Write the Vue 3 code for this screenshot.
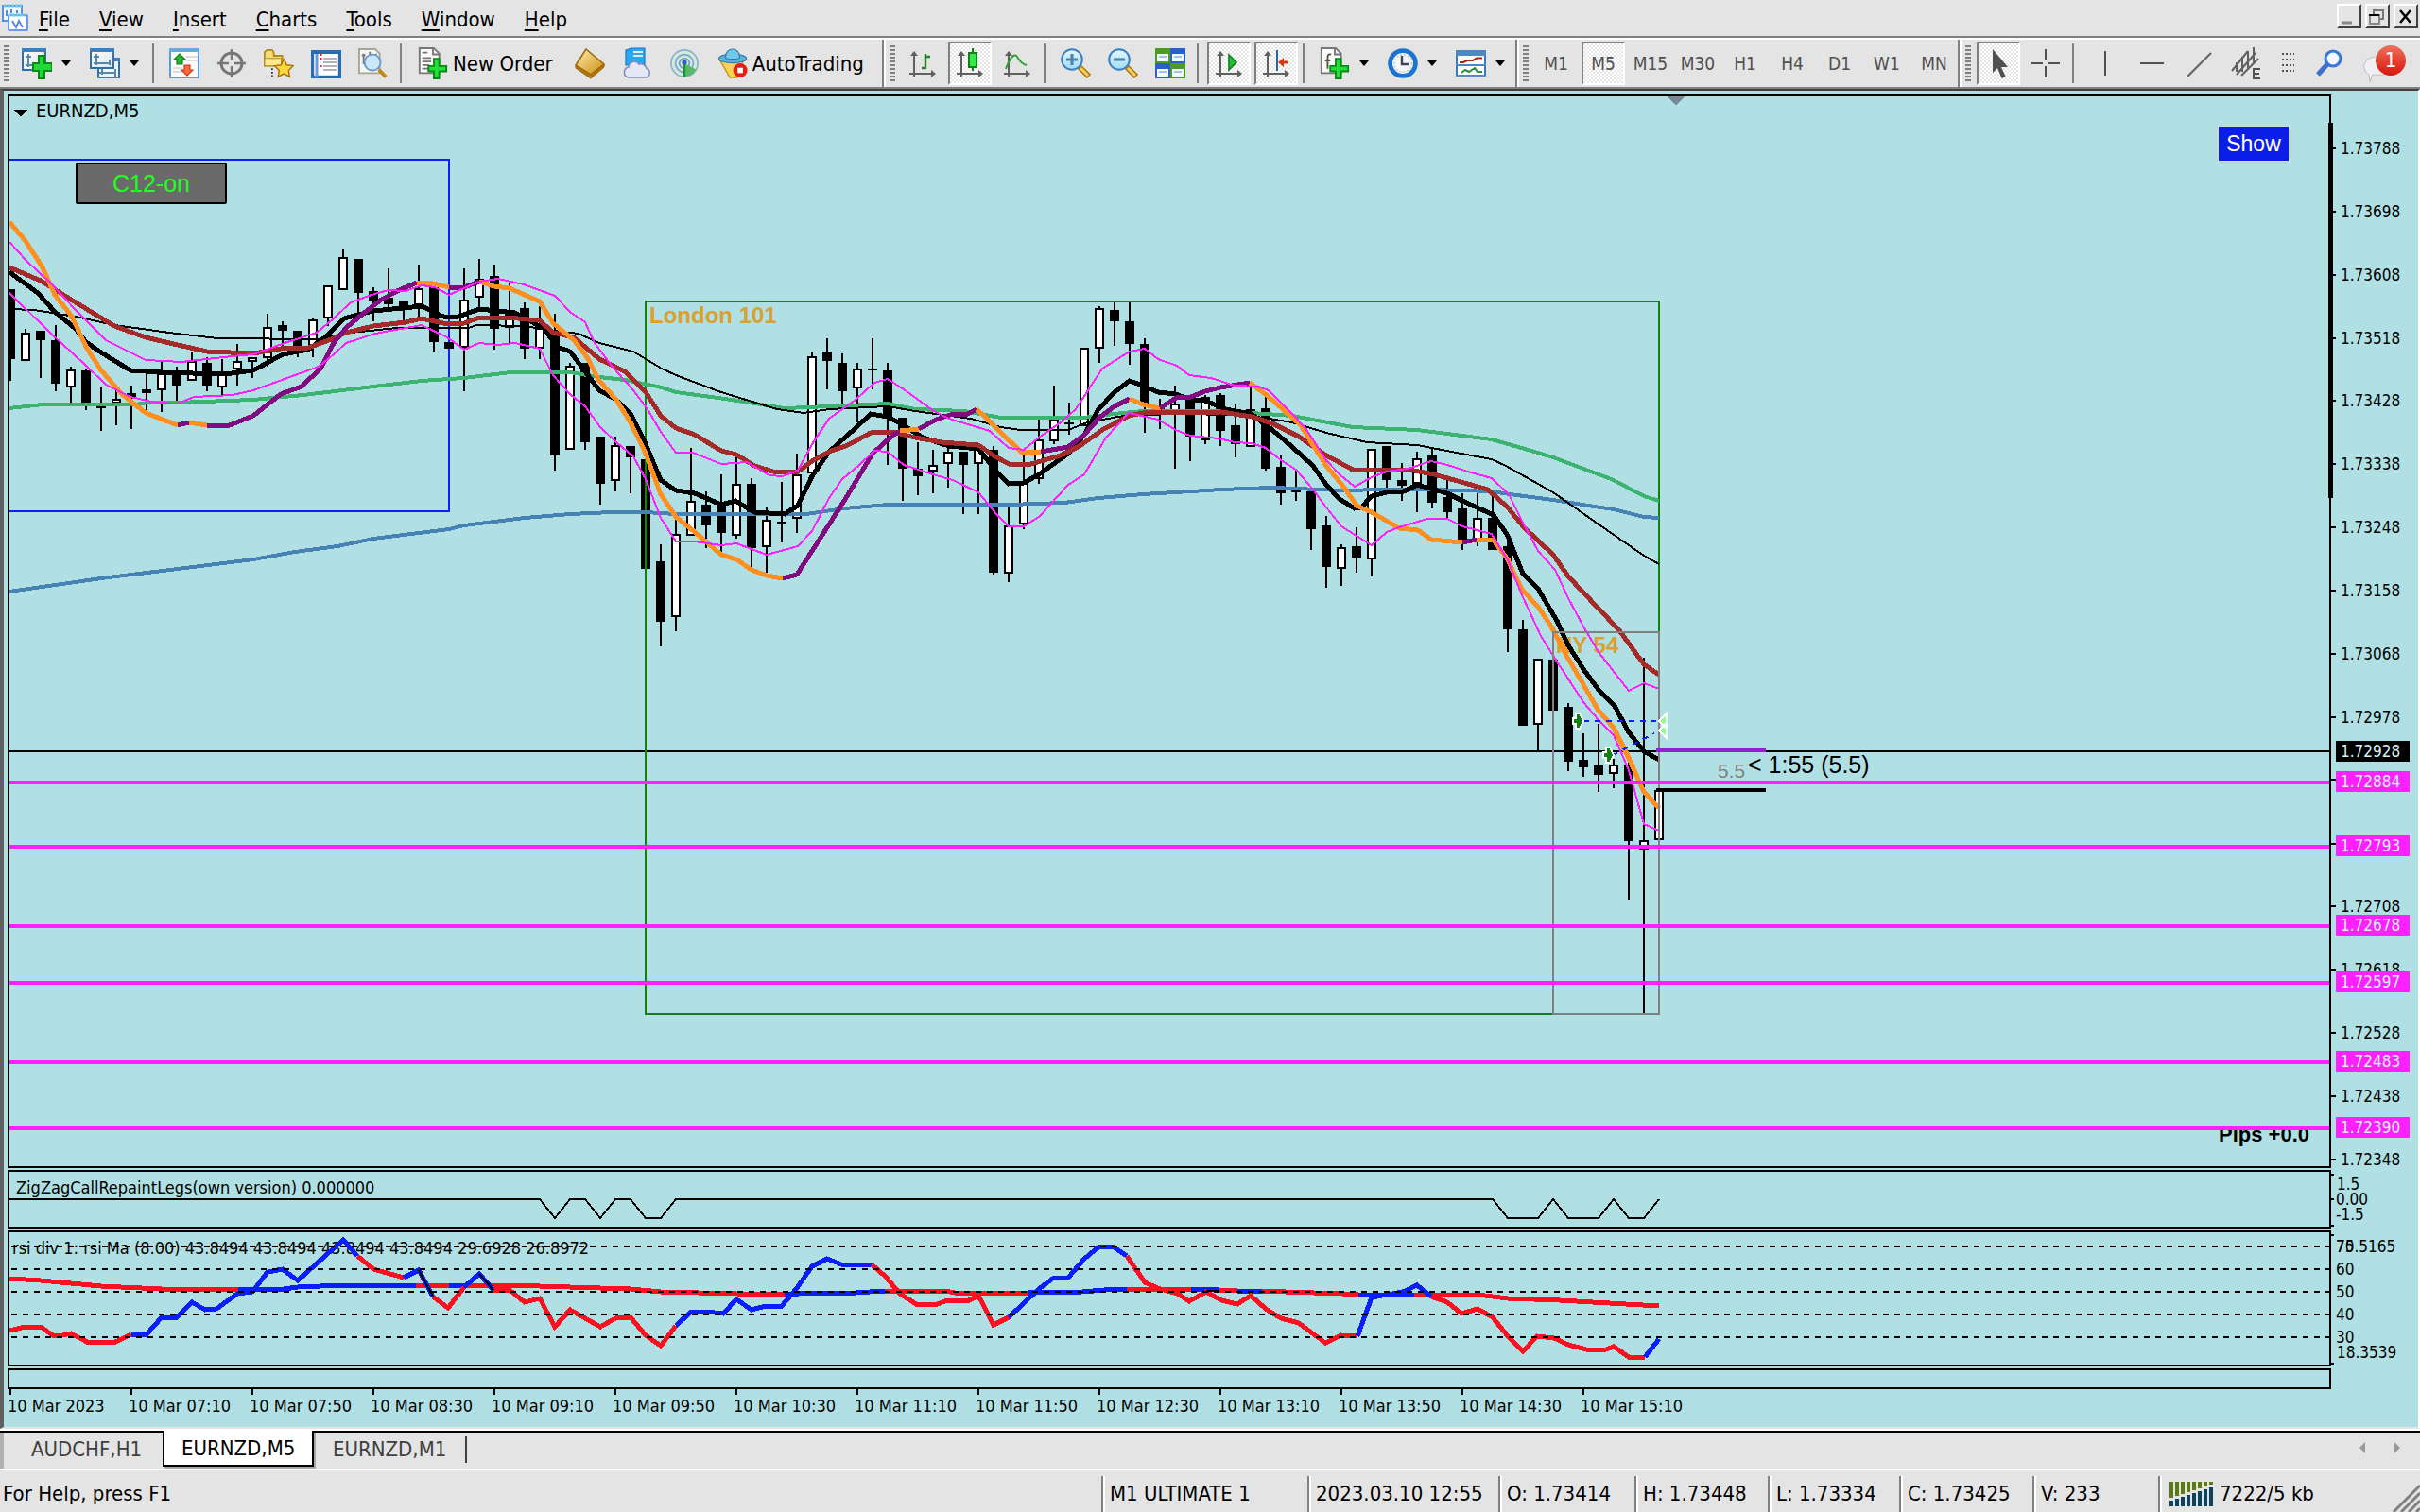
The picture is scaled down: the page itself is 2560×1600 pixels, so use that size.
<script setup>
const menus = ['File', 'View', 'Insert', 'Charts', 'Tools', 'Window', 'Help']
const frames = ['M1', 'M5', 'M15', 'M30', 'H1', 'H4', 'D1', 'W1', 'MN']
const tabs = ['AUDCHF,H1', 'EURNZD,M5', 'EURNZD,M1']
const quote = [
  { k: 'profile', w: 218, t: 'M1 ULTIMATE 1' },
  { k: 'time', w: 202, t: '2023.03.10 12:55' },
  { k: 'o', w: 144, t: 'O: 1.73414' },
  { k: 'h', w: 141, t: 'H: 1.73448' },
  { k: 'l', w: 139, t: 'L: 1.73334' },
  { k: 'c', w: 141, t: 'C: 1.73425' },
  { k: 'v', w: 133, t: 'V: 233' },
]

const standard = [
  { combo: 'new-chart', t: 'New chart' }, { combo: 'profiles', t: 'Profiles' }, { sep: 1 },
  { icon: 'market', t: 'Market Watch' }, { icon: 'target', t: 'Data Window' },
  { icon: 'navigator', t: 'Navigator' }, { icon: 'terminal', t: 'Terminal' },
  { icon: 'tester', t: 'Strategy Tester' }, { sep: 1 },
  { icon: 'order', label: 'New Order' }, { icon: 'gold', t: 'MetaEditor' },
  { icon: 'cloud', t: 'Options' }, { icon: 'signal', t: 'Signals' },
  { icon: 'auto', label: 'AutoTrading' },
]
const charting = [
  { icon: 'bars', t: 'Bar Chart' }, { icon: 'candles', t: 'Candlesticks', on: 1 },
  { icon: 'curve', t: 'Line Chart' }, { sep: 1 }, { icon: 'zoom-in', t: 'Zoom In' },
  { icon: 'zoom-out', t: 'Zoom Out' }, { icon: 'tile', t: 'Tile Windows' }, { sep: 1 },
  { icon: 'scroll', t: 'Auto Scroll', on: 1 }, { icon: 'shift', t: 'Chart Shift', on: 1 },
  { sep: 1 }, { combo: 'indicators', t: 'Indicators' }, { combo: 'clock', t: 'Periods' },
  { combo: 'template', t: 'Templates' },
]
const drawing = [
  { icon: 'pointer', t: 'Cursor', on: 1 }, { icon: 'cross', t: 'Crosshair' }, { sep: 1 },
  { icon: 'vline', t: 'Vertical Line' }, { icon: 'hline', t: 'Horizontal Line' },
  { icon: 'trend', t: 'Trendline' }, { icon: 'channel', t: 'Channel' },
]

/* price scale */
const priceY = p => Math.round(157 + (73788 - p) * 0.743)
const scale = Array.from({ length: 17 }, (_, i) => 73788 - i * 90)
  .filter(p => p !== 72888 && p !== 72798)
  .map(p => ({ y: priceY(p), t: '1.' + p }))
const levels = [
  { y: 827, t: '1.72884' }, { y: 895, t: '1.72793' }, { y: 979, t: '1.72678' },
  { y: 1039, t: '1.72597' }, { y: 1123, t: '1.72483' }, { y: 1193, t: '1.72390' },
]

/* bars: high, body top, body bottom, low, rising */
const bars = [
  [306,306,380,403,0],[348,352,382,382,1],[350,350,360,400,0],[344,360,406,414,0],[388,391,410,426,1],
  [390,392,427,434,0],[410,430,432,456,0],[413,422,427,450,1],[408,416,421,454,0],[394,412,416,435,0],
  [382,395,413,436,1],[388,392,408,424,0],[372,382,403,403,1],[378,384,408,414,0],[380,395,410,418,1],
  [364,382,391,408,1],[378,378,383,400,1],[332,346,379,388,1],[340,344,350,368,0],[350,350,367,378,0],
  [336,338,367,378,1],[302,302,337,345,1],[264,272,307,307,1],[274,274,310,332,0],[304,308,318,340,0],
  [284,315,322,327,0],[318,318,325,340,0],[280,305,323,335,1],[303,304,362,372,0],[362,362,369,369,0],
  [284,317,368,414,1],[274,295,315,327,1],[280,292,348,370,0],[300,332,347,363,1],[320,326,369,380,0],
  [324,347,369,380,1],[332,350,482,498,0],[384,387,476,476,1],[384,384,468,476,0],[462,462,512,534,0],
  [462,471,509,520,1],[472,472,484,522,0],[486,486,602,602,0],[576,594,658,684,0],[547,565,653,668,1],
  [474,530,567,567,1],[520,534,556,580,0],[502,534,564,584,0],[483,512,567,570,1],[506,512,580,600,0],
  [536,550,579,606,1],[510,552,554,574,0],[480,502,549,564,1],[372,377,501,501,1],[358,372,382,412,0],
  [374,384,414,428,0],[384,390,411,447,1],[358,390,392,412,0],[384,392,443,492,0],[442,442,496,530,0],
  [468,496,504,524,0],[476,492,499,522,1],[473,478,491,516,1],[478,478,492,544,0],[475,475,491,544,1],
  [472,476,606,608,0],[536,556,607,616,1],[482,511,555,560,1],[444,465,507,512,1],[408,444,467,470,1],
  [426,447,449,460,0],[368,368,451,451,1],[324,326,369,384,1],[320,328,340,366,0],[320,340,364,386,0],
  [358,364,428,458,0],[422,432,434,454,0],[408,427,437,496,1],[421,423,462,488,0],[418,420,466,470,1],
  [416,418,456,472,0],[428,450,470,484,0],[410,433,473,473,1],[420,432,496,498,0],[482,494,522,534,0],
  [497,519,521,530,0],[520,520,560,582,0],[546,556,600,622,0],[576,579,602,620,1],[558,578,590,606,0],
  [475,475,592,610,1],[472,472,508,517,0],[490,508,514,530,0],[478,485,512,542,1],[474,482,532,538,0],
  [508,526,542,548,0],[522,538,574,582,0],[522,548,572,578,1],[522,548,582,582,0],[572,578,666,690,0],
  [656,666,768,768,0],[697,697,767,794,1],[698,698,752,752,0],[744,748,806,816,0],[776,804,812,822,0],
  [766,810,820,838,0],[803,809,819,834,1],[800,810,890,952,0],[696,889,899,1072,1],[836,836,889,889,1],
].map(([h, a, b, l, up], i) => ({ x: 11 + i * 16, h, a, b: Math.max(b, a + 2), l, up }))

const averages = [
  { c: '#4682b4', w: 4, p: '10,626 107,612 188,602 268,592 312,584 357,578 395,570 475,560 491,556 555,548 603,544 647,542 683,542 715,544 853,544 893,538 940,534 1067,534 1126,532 1162,527 1209,523 1260,520 1292,518 1346,516 1371,517 1417,519 1467,518 1514,518 1578,520 1597,523 1643,529 1680,535 1707,539 1739,547 1755,548' },
  { c: '#3cb371', w: 4, p: '10,432 45,428 143,428 156,426 188,426 268,423 321,418 395,409 446,403 491,400 540,394 603,394 634,399 661,402 700,410 715,415 767,422 830,432 877,430 939,427 968,433 1020,435 1059,442 1146,442 1178,438 1209,435 1292,435 1324,437 1367,440 1431,452 1499,455 1578,465 1620,477 1643,484 1707,508 1739,525 1755,530' },
  { c: '#000', w: 2, p: '10,327 36,328 80,335 121,344 179,352 230,358 339,359 362,353 420,347 496,347 504,344 555,345 585,350 612,353 634,363 670,372 700,390 715,397 763,415 822,433 850,437 877,433 939,430 968,435 1027,443 1059,452 1079,455 1130,455 1150,447 1194,439 1260,438 1324,440 1367,447 1403,458 1446,468 1499,471 1546,480 1578,486 1593,493 1643,521 1687,552 1739,588 1755,597' },
  { c: '#000', w: 5, p: '10,288 40,310 58,330 80,348 91,362 107,373 138,392 171,394 237,396 268,392 299,375 326,370 344,357 364,337 395,329 446,324 469,335 482,336 507,327 545,331 576,348 589,367 603,372 634,413 652,423 667,438 683,470 699,508 715,519 735,522 763,534 778,530 798,542 830,544 844,535 859,504 877,478 905,453 921,438 939,441 956,450 976,463 1004,472 1035,475 1055,500 1067,512 1083,511 1099,502 1130,480 1147,460 1162,433 1179,415 1195,403 1209,408 1225,415 1244,417 1259,423 1275,424 1296,433 1324,438 1346,455 1367,473 1389,493 1403,513 1417,528 1433,538 1440,537 1451,525 1467,521 1485,520 1499,513 1531,522 1547,530 1580,545 1595,567 1611,607 1627,623 1647,657 1659,683 1675,708 1691,730 1708,747 1723,775 1739,795 1755,804' },
  { c: '#a52a2a', w: 5, p: '10,283 43,297 80,320 121,345 154,357 188,365 219,372 268,374 297,369 326,368 348,360 366,352 395,345 429,341 446,337 469,342 491,342 507,336 536,336 571,339 585,352 607,357 634,380 661,393 683,415 699,440 715,453 735,460 763,477 779,481 798,493 818,499 843,500 859,488 877,478 897,471 921,458 944,457 968,463 996,468 1035,471 1051,482 1067,491 1087,492 1122,482 1142,472 1166,455 1194,440 1209,437 1292,436 1324,441 1346,448 1374,462 1403,482 1431,497 1496,498 1517,502 1574,518 1595,537 1612,558 1643,587 1659,610 1690,643 1713,667 1739,703 1755,714' },
]
const O = '#ff8f20'
const P = '#800c80'
const hull = [
  [O, '10,235 27,255 45,283 58,312 76,335 91,367 107,392 129,417 154,437 188,450'],
  [P, '188,450 200,447'], [O, '200,447 219,450'],
  [P, '219,450 243,450 268,440 297,417 319,409 339,390 353,363 366,347 384,332 402,318 420,308 441,299'],
  [O, '441,299 458,300 475,304'], [P, '475,304 491,304 507,298'],
  [O, '507,298 523,303 539,305 571,319 585,342 607,360 621,378 634,403 652,423 667,447 683,480 699,523 715,547 735,563 763,587 779,592 795,603 811,609 828,612'],
  [P, '828,612 843,608 861,580 893,530 923,480 944,461 952,456'], [O, '952,456 972,454'],
  [P, '972,454 990,444 1005,439 1024,438 1033,433'], [O, '1033,433 1043,442 1061,460 1080,478 1101,478'],
  [P, '1101,478 1130,473 1147,460 1163,442 1179,430 1195,422'], [O, '1195,422 1209,428 1227,432'],
  [P, '1227,432 1244,421 1260,420 1275,414 1291,410 1322,405'],
  [O, '1322,405 1340,418 1358,434 1376,450 1389,471 1403,493 1422,516 1435,535 1451,542 1480,559 1500,561 1514,571 1547,574'],
  [P, '1547,574 1562,571'],
  [O, '1562,571 1580,572 1595,592 1603,610 1611,625 1627,642 1641,663 1655,690 1691,752 1707,770 1723,802 1739,838 1755,855'],
]
const bands = [
  '10,256 27,275 54,300 80,328 112,360 154,381 192,383 246,377 268,375 304,362 335,352 353,337 371,320 393,312 411,307 429,308 446,302 460,304 475,312 507,298 527,295 554,301 587,313 603,330 619,341 629,363 647,387 670,413 685,433 699,457 715,479 733,479 763,491 790,489 814,503 828,504 844,498 859,470 877,443 905,423 925,405 939,401 956,412 988,435 1004,443 1047,456 1067,474 1083,476 1099,463 1122,447 1138,433 1166,390 1195,372 1211,369 1225,380 1245,387 1258,397 1281,400 1306,408 1331,409 1342,413 1367,438 1381,453 1403,487 1417,502 1433,515 1451,505 1467,499 1489,496 1514,488 1531,492 1556,500 1578,506 1596,523 1611,553 1627,583 1645,603 1659,633 1675,663 1691,690 1723,731 1739,723 1755,729',
  '10,310 54,353 89,385 112,407 138,420 165,426 188,427 205,420 246,418 268,413 312,397 337,388 353,375 366,363 397,353 424,348 446,344 473,357 491,370 507,363 527,365 545,363 571,369 585,397 603,417 619,430 635,452 652,468 670,483 683,507 699,548 715,573 735,573 763,577 779,575 811,587 844,578 859,562 877,527 891,507 909,492 925,477 939,478 956,492 987,502 1008,508 1035,521 1055,545 1067,557 1083,557 1099,547 1130,513 1147,502 1170,463 1194,437 1225,444 1244,455 1259,461 1289,464 1306,468 1324,469 1339,474 1355,487 1371,497 1389,518 1403,537 1419,557 1451,577 1467,563 1483,557 1510,549 1531,549 1547,557 1578,565 1595,593 1611,632 1630,673 1645,697 1675,743 1691,762 1707,778 1723,815 1739,872 1755,879',
]
const R = '#ff1020'
const B = '#0a1eff'
const rsi = [
  [R, '10,1353 43,1355 75,1358 107,1361 171,1364 252,1364'], [B, '252,1364 300,1364 315,1362 363,1360 440,1360'],
  [R, '440,1360 475,1360'], [B, '475,1360 492,1360'],
  [R, '492,1360 571,1361 603,1362 667,1364 699,1367 779,1369 830,1370'],
  [B, '830,1370 860,1368 905,1368 936,1366'], [R, '936,1366 1000,1366 1010,1368 1088,1368'],
  [B, '1088,1368 1145,1367 1180,1364 1192,1364'], [R, '1192,1364 1260,1364'], [B, '1260,1364 1290,1365'],
  [R, '1290,1365 1309,1366'], [B, '1309,1366 1335,1366'], [R, '1335,1366 1360,1367 1420,1369 1437,1370'],
  [B, '1437,1370 1496,1370'], [R, '1496,1370 1563,1370 1595,1374 1650,1376 1755,1382'],
  [R, '10,1408 27,1404 43,1404 56,1413 66,1413 75,1411 92,1420 122,1420 139,1412'],
  [B, '139,1412 155,1412 171,1394 187,1394 203,1378 217,1386 229,1385 251,1369 267,1367 283,1346 299,1343 315,1355 363,1312 378,1329'],
  [R, '378,1329 395,1343 427,1352'], [B, '427,1352 443,1344 458,1372'], [R, '458,1372 474,1384 491,1362'],
  [B, '491,1362 507,1348 522,1365'],
  [R, '522,1365 539,1365 555,1378 571,1374 587,1404 603,1386 635,1404 651,1395 667,1394 683,1413 699,1424 715,1403'],
  [B, '715,1403 731,1388 747,1388 765,1390 779,1375 795,1386 810,1382 827,1382 843,1363 859,1340 875,1332 890,1338 922,1338'],
  [R, '922,1338 937,1351 952,1369 969,1380 992,1380 1002,1376 1025,1376 1035,1371 1051,1402 1067,1394'],
  [B, '1067,1394 1099,1364 1115,1352 1130,1352 1147,1332 1163,1319 1177,1319 1192,1329'],
  [R, '1192,1329 1211,1357 1227,1364 1246,1369 1258,1377 1276,1367 1292,1376 1309,1380 1323,1371 1339,1385 1355,1395 1374,1400 1402,1421 1419,1413 1436,1414'],
  [B, '1436,1414 1451,1373 1484,1367 1499,1360 1514,1372'],
  [R, '1514,1372 1531,1378 1546,1390 1563,1385 1579,1394 1595,1414 1611,1430 1626,1414 1644,1416 1659,1423 1678,1428 1699,1428 1707,1425 1723,1436 1740,1436'],
  [B, '1740,1436 1755,1417'],
]
const zigzag = '10,1269 571,1269 587,1289 603,1269 619,1269 635,1289 651,1269 667,1269 683,1289 699,1289 715,1269 1579,1269 1595,1289 1627,1289 1643,1269 1659,1289 1691,1289 1707,1269 1723,1289 1739,1289 1755,1269'
const rsiLevels = [1319, 1343, 1367, 1391, 1415]
const times = ['2023', '07:10', '07:50', '08:30', '09:10', '09:50', '10:30', '11:10', '11:50', '12:30', '13:10', '13:50', '14:30', '15:10']
</script>

<template>
  <div class="app">
    <svg class="defs" aria-hidden="true">
      <defs>
        <linearGradient id="gBlue" x1="0" y1="0" x2="0" y2="1"><stop offset="0" stop-color="#e8f6ff" /><stop offset="1" stop-color="#9fdcf8" /></linearGradient>
        <linearGradient id="gGold" x1="0" y1="0" x2="1" y2="1"><stop offset="0" stop-color="#fff0b0" /><stop offset="1" stop-color="#c98a10" /></linearGradient>
        <linearGradient id="gFile" x1="0" y1="0" x2="1" y2="1"><stop offset="0" stop-color="#fff" /><stop offset="1" stop-color="#d8e4f0" /></linearGradient>
      </defs>
      <symbol id="new-chart" viewBox="0 0 16 16">
        <rect x=".5" y=".5" width="12" height="11" fill="url(#gFile)" stroke="#2f6fae" /><path d="M0 0h13v2H0z" fill="#3a80c0" />
        <path d="M3.500 3v7M2 4.500h3M2 9h7" stroke="#5a86a8" fill="none" /><path d="M9 4v4h-3v4h3v4h3v-4h4v-4h-4v-4z" fill="#22d838" stroke="#0a8a18" />
      </symbol>
      <symbol id="profiles" viewBox="0 0 16 16">
        <rect x="4.500" y="5.500" width="11" height="10" fill="#eef4fa" stroke="#2f6fae" /><path d="M4 5h12v2H4zM4 15h12v1H4z" fill="#3a80c0" />
        <rect x=".5" y=".5" width="12" height="10" fill="url(#gFile)" stroke="#2f6fae" /><path d="M0 0h13v2H0z" fill="#3a80c0" />
        <path d="M3.500 3v6M2 4.500h3M2 8h9M10.500 6v3M6.500 11v3M5 13h9M13.500 11v4" stroke="#5a86a8" fill="none" />
      </symbol>
      <symbol id="market" viewBox="0 0 16 16">
        <rect x=".5" y=".5" width="15" height="15" fill="#fdfdfd" stroke="#5a9ad6" /><path d="M0 0h16v2H0z" fill="#6aa8e0" />
        <path d="M9 4.500h6M9 6.500h6M2 10.500h5M2 12.500h5" stroke="#ddd" /><path d="M5.500 3l3 3H7v2.500H4V6H2.500z" fill="#28b030" stroke="#128018" stroke-width=".6" />
        <path d="M9.500 14.500l-3-3H8V9h3v2.500h1.500z" fill="#ff6a3c" stroke="#c83a10" stroke-width=".6" />
      </symbol>
      <symbol id="target" viewBox="0 0 16 16">
        <circle cx="8" cy="8" r="5.500" fill="none" stroke="#777" stroke-width="1.500" /><path d="M8 .5v6M8 9.500v6M.5 8h6M9.500 8h6" stroke="#777" stroke-width="1.200" />
      </symbol>
      <symbol id="navigator" viewBox="0 0 18 16">
        <path d="M.5 9.500v-8L2 0h3l1 1.500v2h5v6z" fill="#f4dc70" stroke="#b08a20" /><path d="M.5 9.500V5h10v4.500z" fill="#ffe98c" stroke="#b08a20" stroke-width=".6" /><path d="M5 11v5" stroke="#333" stroke-dasharray="1 1" />
        <path d="M12 5.500l1.700 3.500 3.800.5-2.700 2.700.6 3.800-3.400-1.800L8.600 16l.6-3.800-2.700-2.700 3.800-.5z" fill="#ffd83c" stroke="#a87010" stroke-width=".8" />
      </symbol>
      <symbol id="terminal" viewBox="0 0 16 16">
        <rect x=".8" y="1.800" width="14.400" height="13.400" fill="#fff" stroke="#2a6cb4" stroke-width="1.600" /><path d="M0 1h16v2H0z" fill="#2a6cb4" />
        <path d="M3 3v12" stroke="#6a9ad0" stroke-width="1.500" /><path d="M6.500 5.500h7M6.500 7.500h7M6.500 9.500h7M6.500 11.500h7" stroke="#99a" stroke-width=".8" /><path d="M4.800 3.500h1M4.800 5.500h1M4.800 9.500h1" stroke="#f02020" />
      </symbol>
      <symbol id="tester" viewBox="0 0 17 17">
        <path d="M.5.500h9l2.500 2.500v11H.5z" fill="#f6f6f6" stroke="#a8a494" /><path d="M3 3v6M2 4h2M6.500 2v3M10 3v3" stroke="#777" />
        <circle cx="8" cy="8" r="4.500" fill="#c8e8fc" stroke="#6a9ad0" /><path d="M11.500 12l4 4.200" stroke="#c08a18" stroke-width="2" />
      </symbol>
      <symbol id="order" viewBox="0 0 16 18">
        <path d="M.5.500h8l3 3v11H.5z" fill="#fafafa" stroke="#777" /><path d="M8 .5v3.500h3.500" fill="none" stroke="#777" /><path d="M2 3h3M2 6h5M2 8h5M2 10h4M2 12h4" stroke="#777" /><path d="M8.500 6.500v4h-3v3h3v4h3v-4h4v-3h-4v-4z" fill="#22e03a" stroke="#0a8a18" />
      </symbol>
      <symbol id="gold" viewBox="0 0 16 16">
        <path d="M.5 9l8 5 7-5.500v1.500l-7 6-8-5.500z" fill="#b8780c" stroke="#906008" stroke-width=".5" /><path d="M6 .5l9.500 8-7 5.500-8-5z" fill="url(#gGold)" stroke="#a06a08" stroke-width=".8" />
      </symbol>
      <symbol id="cloud" viewBox="0 0 16 16">
        <path d="M2 1l3-1h7v9H2z" fill="#28a8f4" stroke="#1878c8" stroke-width=".6" /><path d="M6 2h5M6 4h5" stroke="#d8f0ff" />
        <path d="M3.500 15.500a2.800 2.800 0 010-5.500 3 3 0 015.500-1.500 3.200 3.200 0 014 2.200 2.500 2.500 0 01-.5 4.800z" fill="#e4e8f4" stroke="#8090b8" stroke-width=".8" />
      </symbol>
      <symbol id="signal" viewBox="0 0 17 17">
        <circle cx="8.500" cy="8.500" r="7.500" fill="#d4e8dc" stroke="#8ab4c8" stroke-width=".9" /><circle cx="8.500" cy="8.500" r="5" fill="none" stroke="#7aa8d0" stroke-width=".9" /><circle cx="8.500" cy="8.500" r="2.800" fill="none" stroke="#6a98c8" stroke-width=".9" />
        <path d="M8.500 8.500V16a7.500 7.500 0 006.500-4z" fill="#58b868" /><path d="M8.500 8v8" stroke="#109828" stroke-width="1.200" /><circle cx="8.500" cy="8" r="1.400" fill="#2a60c0" />
      </symbol>
      <symbol id="auto" viewBox="0 0 17 17">
        <path d="M1.500 7h13l-3.500 9.500H7z" fill="#fcd450" stroke="#c09018" stroke-width=".7" /><ellipse cx="8.500" cy="5.800" rx="7.800" ry="2.500" fill="#58b4dc" stroke="#2f7ca8" stroke-width=".6" /><path d="M4.500 5c0-6 8-6 8 0 0 1.500-8 1.500-8 0z" fill="#70c8ec" stroke="#2f7ca8" stroke-width=".6" />
        <circle cx="12.800" cy="12.500" r="4" fill="#e02010" /><rect x="11.300" y="11" width="3" height="3" fill="#fff" />
      </symbol>
      <symbol id="axes" viewBox="0 0 16 16"><path d="M3.500 3v12M1 13.500h13" stroke="#606060" fill="none" /><path d="M3.500 1.500l-2 2.500h4zM15 13.500l-2.500-2v4z" fill="#606060" /></symbol>
      <symbol id="bars" viewBox="0 0 16 16"><use href="#axes" /><path d="M9.500 3v8M7.500 10.500h2M9.500 4.500h2.500" stroke="#208028" fill="none" stroke-width="1.200" /></symbol>
      <symbol id="candles" viewBox="0 0 16 16"><use href="#axes" /><path d="M9.500 0v12" stroke="#108018" /><rect x="7.500" y="2.500" width="4" height="7.500" fill="#38e848" stroke="#108018" /></symbol>
      <symbol id="curve" viewBox="0 0 16 16"><use href="#axes" /><path d="M2 11c3-8 5-8 6-6.500s2 4 5 4.500" stroke="#30a038" fill="none" /></symbol>
      <symbol id="lens" viewBox="0 0 16 16"><path d="M10 10l5 5" stroke="#a87810" stroke-width="3" /><path d="M10.500 10.500l4 4" stroke="#f8d458" stroke-width="1.400" /><circle cx="6" cy="6" r="5.400" fill="url(#gBlue)" stroke="#3a80c0" /></symbol>
      <symbol id="zoom-in" viewBox="0 0 16 16"><use href="#lens" /><path d="M6 3v6M3 6h6" stroke="#4888a8" stroke-width="1.600" /></symbol>
      <symbol id="zoom-out" viewBox="0 0 16 16"><use href="#lens" /><path d="M3 6h6" stroke="#4888a8" stroke-width="1.600" /></symbol>
      <symbol id="tile" viewBox="0 0 16 16">
        <path d="M0 0h8v8H0zM8 8h8v8H8z" fill="#4c9c20" /><path d="M8 0h8v8H8zM0 8h8v8H0z" fill="#2860d0" />
        <path d="M1 3h6v4H1zM9 3h6v4H9zM1 11h6v4H1zM9 11h6v4H9z" fill="#f4f8ff" /><path d="M2 4.500h4M10 4.500h4M2 12.500h4M10 12.500h4" stroke="#a8c0e0" />
      </symbol>
      <symbol id="scroll" viewBox="0 0 16 16"><use href="#axes" /><path d="M8 3.500v8l4-4z" fill="#20c038" stroke="#108018" stroke-width=".8" /></symbol>
      <symbol id="shift" viewBox="0 0 16 16"><use href="#axes" /><path d="M8.500 1v11" stroke="#2868a0" /><path d="M9 7.500l3-2.500v1.800h2.500v1.400H12V10z" fill="#d83810" /></symbol>
      <symbol id="indicators" viewBox="0 0 16 18">
        <path d="M.5.500h8l3 3v11H.5z" fill="#fafafa" stroke="#777" /><path d="M8 .5v3.500h3.500" fill="none" stroke="#777" /><path d="M6 4c-2-.5-2 1-2 2v6M2.500 7.500h3" stroke="#554" fill="none" /><path d="M8.500 6.500v4h-3v3h3v4h3v-4h4v-3h-4v-4z" fill="#22e03a" stroke="#0a8a18" />
      </symbol>
      <symbol id="clock" viewBox="0 0 16 16"><circle cx="8" cy="8" r="6.700" fill="#f4f6fa" stroke="#1c74d0" stroke-width="2.400" /><circle cx="8" cy="8" r="4.600" fill="none" stroke="#bbb" stroke-width=".6" stroke-dasharray="1 1" /><path d="M7.500 4v4.500H11" stroke="#445" fill="none" stroke-width="1.200" /></symbol>
      <symbol id="template" viewBox="0 0 16 16"><rect x=".5" y="1.500" width="15" height="13" fill="#fff" stroke="#3a78b8" /><path d="M0 1h16v3H0zM0 8.500h16v1H0zM0 14h16v1H0z" fill="#4c88c4" /><path d="M2 7.500h2l2-1h3l2-1.200h3" stroke="#a02818" fill="none" /><path d="M3 13l2-1.500 2 1 3-2 1.500 2H14" stroke="#28903c" fill="none" /></symbol>
      <symbol id="pointer" viewBox="0 0 16 16"><path d="M5 .5v12.500l2.500-2.500L9.800 16l2-1-2.300-5H13z" fill="#505050" /></symbol>
      <symbol id="cross" viewBox="0 0 16 16"><path d="M8 .5v6M8 9.500v6M.5 8h6M9.500 8h6" stroke="#505050" /></symbol>
      <symbol id="vline" viewBox="0 0 16 16"><path d="M8.500 1.500v13" stroke="#505050" /></symbol>
      <symbol id="hline" viewBox="0 0 16 16"><path d="M2 8h12.500" stroke="#505050" /></symbol>
      <symbol id="trend" viewBox="0 0 16 16"><path d="M2 15L14.500 2.500" stroke="#606060" /></symbol>
      <symbol id="channel" viewBox="0 0 16 17"><path d="M.5 12.500L9 2M3 14.500L13 3M5.500 15L14.500 6M3 8v5M6 5v8M9 2v9M12 0v8" stroke="#606060" fill="none" /><path d="M15.500 11.500h-3.500v5h3.500M12 14h3" stroke="#505050" fill="none" /></symbol>
    </svg>

    <header class="menubar">
      <svg class="logo" viewBox="0 0 30 30" aria-hidden="true">
        <rect x="2" y="3" width="20" height="16" fill="#eef6ff" stroke="#5a90e0" stroke-width="2" /><path d="M3 3h20" stroke="#70c8e8" stroke-width="3" stroke-dasharray="3 1" />
        <rect x="8" y="13" width="20" height="16" rx="1" fill="#fff" stroke="#6a98f0" stroke-width="2" /><path d="M8 13h20" stroke="#70c8e8" stroke-width="3" stroke-dasharray="3 1" /><path d="M6 8v6M11 6v5M17 8v3M12 19l4 7 3-7 4 7" stroke="#5a88e8" stroke-width="2" fill="none" />
      </svg>
      <nav class="menus">
        <button v-for="m in menus" :key="m" type="button"><u>{{ m[0] }}</u>{{ m.slice(1) }}</button>
      </nav>
      <div class="winbtns">
        <button type="button" aria-label="Minimize"><svg viewBox="0 0 22 21"><path d="M3 17h11" stroke="#888" stroke-width="3" /></svg></button>
        <button type="button" aria-label="Restore"><svg viewBox="0 0 22 21"><path d="M7 8V4h10v9h-3" stroke="#777" stroke-width="2" fill="none" /><path d="M3 9h10v9H3z" stroke="#888" stroke-width="2" fill="none" /><path d="M2 9h11" stroke="#000" stroke-width="2" /></svg></button>
        <button type="button" aria-label="Close"><svg viewBox="0 0 22 21"><path d="M5 4l11 13M16 4L5 17" stroke="#000" stroke-width="2.500" /></svg></button>
      </div>
    </header>

    <div class="toolbars">
      <div v-for="(group, g) in [standard, charting]" :key="g" class="bar" :class="'bar' + g">
        <i class="grip"></i>
        <template v-for="(it, n) in group" :key="n">
          <i v-if="it.sep" class="sep"></i>
          <span v-else-if="it.combo" class="combo">
            <button type="button" class="tool" :aria-label="it.t"><svg><use :href="'#' + it.combo" /></svg></button>
            <button type="button" class="drop" :aria-label="it.t + ' menu'"><svg viewBox="0 0 10 6"><path d="M0 0h10L5 6z" /></svg></button>
          </span>
          <button v-else-if="it.label" type="button" class="tool wide"><svg><use :href="'#' + it.icon" /></svg>{{ it.label }}</button>
          <button v-else type="button" class="tool" :class="{ on: it.on }" :aria-label="it.t"><svg><use :href="'#' + it.icon" /></svg></button>
        </template>
      </div>
      <div class="bar bar2">
        <i class="grip"></i>
        <button v-for="f in frames" :key="f" type="button" class="tool tf" :class="{ on: f === 'M5' }">{{ f }}</button>
      </div>
      <div class="bar bar3">
        <i class="grip"></i>
        <template v-for="(it, n) in drawing" :key="n">
          <i v-if="it.sep" class="sep"></i>
          <button v-else type="button" class="tool" :class="{ on: it.on }" :aria-label="it.t"><svg><use :href="'#' + it.icon" /></svg></button>
        </template>
        <span class="dots"></span>
        <button type="button" class="tool" aria-label="Search"><svg viewBox="0 0 16 16"><circle cx="10" cy="5.500" r="4" fill="#f4f8ff" stroke="#3a78d8" stroke-width="1.600" /><path d="M7 8.500l-5 5.500" stroke="#3a70c8" stroke-width="2.600" /></svg></button>
        <button type="button" class="news" aria-label="Notifications">
          <svg viewBox="0 0 36 36"><path d="M2 18a15 12 0 1124 8l-14 0-3 9-1-9a12 12 0 01-6-8z" fill="#f0f0f4" stroke="#b8b8bc" /></svg>
          <span class="badge">1</span>
        </button>
      </div>
    </div>

    <main class="chart">
      <section class="pane main">
        <div class="plot">
          <svg class="fill">
            <g transform="translate(-10 -102)" shape-rendering="crispEdges">
              <path d="M15 116h14l-7 8z" /><path d="M1764 102h18l-9 10z" fill="#778899" />
              <text x="38" y="124" class="t20">EURNZD,M5</text>
              <path d="M10 795h2500" class="blk2" />
              <text x="2347" y="1208" class="pips">Pips +0.0</text>
              <path d="M0 169H475V541H0" fill="none" :stroke="B" stroke-width="2" />
              <g v-for="b in bars" :key="b.x">
                <path :d="`M${b.x} ${b.h}V${b.l}`" class="blk2" />
                <rect v-if="b.up" :x="b.x - 4" :y="b.a + 1" width="8" :height="Math.max(b.b - b.a - 2, 1)" fill="#fff" stroke="#000" stroke-width="2" />
                <rect v-else :x="b.x - 5" :y="b.a" width="10" :height="b.b - b.a" />
              </g>
              <path d="M683 319H1755V1073H683z" fill="none" stroke="#108010" stroke-width="2" />
              <text x="687" y="342" class="session">London 101</text>
              <text x="1646" y="691" class="session">NY 54</text>
              <polyline v-for="a in averages" :key="a.p" :points="a.p" :stroke="a.c" :stroke-width="a.w" fill="none" />
              <polyline v-for="h in hull" :key="h[1]" :points="h[1]" :stroke="h[0]" stroke-width="5" fill="none" />
              <polyline v-for="h in bands" :key="h" :points="h" stroke="#ff20ff" stroke-width="2" fill="none" />
              <path d="M1643 1073V669H1755V1073z" fill="none" stroke="#808080" stroke-width="2" />
              <path d="M1675 763H1752" :stroke="B" stroke-width="2" stroke-dasharray="6 6" />
              <path d="M1706 799L1750 776" :stroke="B" stroke-width="2" stroke-dasharray="6 6" />
              <path d="M1664 760h3v-5h4l4 8-4 8h-4v-5h-3zM1696 796h3v-5h4l4 8-4 8h-4v-5h-3z" fill="#108010" stroke="#fff" stroke-width="2" />
              <path d="M1763 755v16l-8-8zM1763 765v16l-8-8z" fill="#90ff90" stroke="#fff" stroke-width="2" />
              <path v-for="l in levels" :key="l.y" :d="`M10 ${l.y + 1}H2500`" stroke="#ff20ff" stroke-width="4" />
              <path d="M1752 794H1868" stroke="#9020d0" stroke-width="4" /><path d="M1752 836H1868" stroke="#000" stroke-width="4" />
              <text x="1817" y="823" class="pip">5.5</text>
              <text x="1849" y="818" class="count">&lt; 1:55 (5.5)</text>
            </g>
          </svg>
          <button type="button" class="c12">C12-on</button>
          <button type="button" class="show">Show</button>
        </div>
        <svg class="axis">
          <g transform="translate(-2466 -100)" shape-rendering="crispEdges">
            <rect x="2463" y="130" width="5" height="397" />
            <g v-for="s in scale" :key="s.y"><path :d="`M2466 ${s.y}h5`" class="blk2" /><text x="2476" :y="s.y + 6" class="t17">{{ s.t }}</text></g>
            <path d="M2466 825h5M2466 893h5" class="blk2" />
            <g v-for="l in levels" :key="l.y"><rect x="2471" :y="l.y - 11" width="78" height="22" fill="#ff20ff" /><text x="2476" :y="l.y + 6" class="t17 inv">{{ l.t }}</text></g>
            <rect x="2471" y="784" width="78" height="22" /><text x="2476" y="801" class="t17 inv">1.72928</text>
          </g>
        </svg>
      </section>

      <section class="pane zz">
        <div class="plot">
          <svg class="fill"><g transform="translate(-10 -1240)" shape-rendering="crispEdges">
            <text x="17" y="1263" class="t18">ZigZagCallRepaintLegs(own version) 0.000000</text>
            <polyline :points="zigzag" fill="none" stroke="#000" stroke-width="2" />
          </g></svg>
        </div>
        <svg class="axis"><g transform="translate(-2466 -1238)">
          <path d="M2466 1243h3M2466 1269h3M2466 1297h3" class="blk2" />
          <text x="2472" y="1259" class="t17">1.5</text><text x="2471" y="1275" class="t17">0.00</text><text x="2471" y="1291" class="t17">-1.5</text>
        </g></svg>
      </section>

      <section class="pane rsi">
        <div class="plot">
          <svg class="fill"><g transform="translate(-10 -1304)" shape-rendering="crispEdges">
            <text x="13" y="1327" class="t18">rsi div 1: rsi Ma (8.00) 43.8494 43.8494 43.8494 43.8494 29.6928 26.8972</text>
            <polyline v-for="(s, i) in rsi" :key="i" :points="s[1]" :stroke="s[0]" stroke-width="5" fill="none" />
            <path d="M443 1344L458 1372M507 1348L522 1365M1276 1366H1290" class="blk2" />
            <path v-for="y in rsiLevels" :key="y" :d="`M12 ${y}H2500`" class="blk2" stroke-dasharray="6 6" />
          </g></svg>
        </div>
        <svg class="axis"><g transform="translate(-2466 -1302)">
          <path d="M2466 1307h3M2466 1443h3" class="blk2" />
          <text x="2471" y="1325" class="t17">70</text><text x="2471" y="1325" class="t17">75.5165</text>
          <text x="2471" y="1349" class="t17">60</text><text x="2471" y="1373" class="t17">50</text>
          <text x="2471" y="1397" class="t17">40</text><text x="2471" y="1421" class="t17">30</text>
          <text x="2472" y="1437" class="t17">18.3539</text>
        </g></svg>
      </section>

      <section class="pane empty"><div class="plot"></div><span class="axis"></span></section>
      <svg class="dates">
        <g v-for="(t, i) in times" :key="t" :transform="`translate(${i * 128} 0)`">
          <path d="M3 0v6" class="blk2" /><text x="0" y="24" class="t18">10 Mar {{ t }}</text>
        </g>
      </svg>
    </main>

    <nav class="tabs">
      <button v-for="t in tabs" :key="t" type="button" :class="{ active: t === 'EURNZD,M5' }">{{ t }}</button>
      <i class="tabsep"></i>
      <span class="arrows">
        <button type="button" aria-label="Previous tab"><svg viewBox="0 0 6 12"><path d="M6 0v12L0 6z" /></svg></button>
        <button type="button" aria-label="Next tab"><svg viewBox="0 0 6 12"><path d="M0 0v12l6-6z" /></svg></button>
      </span>
    </nav>

    <footer class="status">
      <span class="help">For Help, press F1</span>
      <span v-for="q in quote" :key="q.k" class="cell" :style="{ width: q.w + 'px' }">{{ q.t }}</span>
      <span class="cell net">
        <svg viewBox="0 0 46 26" aria-hidden="true"><template v-for="n in 8" :key="n">
          <rect :x="n * 6 - 6" y="0" width="4" :height="19 - n * 2" fill="#5c7a14" /><rect :x="n * 6 - 6" :y="22 - n * 2" width="4" :height="4 + n * 2" fill="#0c4460" />
        </template></svg>7222/5 kb
      </span>
      <svg class="resize" viewBox="0 0 30 32" aria-hidden="true"><path d="M2 32L30 4M10 32L30 12M18 32L30 20M26 32L30 28" stroke="#808080" stroke-width="3" /></svg>
    </footer>
  </div>
</template>

<style>
body { margin: 0; background: #e4e4e4; }
</style>
<style scoped>
.app { display: flex; flex-direction: column; min-height: 100vh; background: #e4e4e4; color: #000; font: 22px "DejaVu Sans Condensed", "DejaVu Sans", sans-serif; }
button { margin: 0; padding: 0; border: 0; background: none; color: inherit; font: inherit; white-space: nowrap; }
.defs { position: absolute; width: 0; height: 0; }

.menubar { display: flex; align-items: flex-start; height: 38px; border-bottom: 2px solid #808080; }
.logo { width: 30px; height: 30px; margin: 3px 0 0 1px; }
.menus { display: flex; gap: 31px; margin-left: 10px; flex: 1; }
.menus button { line-height: 42px; }
.menus u { text-underline-offset: 3px; text-decoration-thickness: 2px; }
.winbtns { display: flex; gap: 4px; padding: 4px 2px 0 0; }
.winbtns button { width: 26px; height: 26px; box-sizing: border-box; border: 2px solid; border-color: #fff #404040 #404040 #fff; }
.winbtns svg { display: block; width: 22px; height: 21px; }

.toolbars { display: flex; height: 50px; border-top: 2px solid #fff; border-bottom: 2px solid #808080; }
.bar { display: flex; align-items: center; gap: 4px; box-sizing: border-box; padding-left: 4px; border-right: 2px solid #808080; flex: none; }
.bar0 { width: 935px; }
.bar1 { width: 670px; }
.bar2 { width: 468px; }
.bar1, .bar2, .bar3 { border-left: 2px solid #fff; }
.bar3 { flex: 1; border-right: 0; }
.grip { width: 6px; height: 38px; margin-right: 2px; background: repeating-linear-gradient(#808080 0 2px, #e4e4e4 2px 4px); }
.sep { width: 2px; height: 42px; margin: 0 5px 0 1px; background: #808080; }
.tool { display: flex; align-items: center; justify-content: center; box-sizing: border-box; width: 46px; height: 46px; border: 2px solid transparent; flex: none; }
.tool svg { width: 32px; height: 34px; flex: none; overflow: visible; }
.tool.on { border-color: #808080 #fff #fff #808080; background: repeating-conic-gradient(#fff 0 25%, #e6e6e6 0 50%) 0 0 / 4px 4px; }
.tool.wide { width: auto; gap: 5px; padding: 0 10px 0 6px; }
.combo { display: flex; width: 68px; }
.drop { width: 16px; }
.drop svg { display: block; width: 10px; height: 6px; margin: 0 auto; }
.tf { color: #505050; font-size: 19px; }
.dots { width: 14px; height: 26px; margin: 0 10px; background: radial-gradient(#505050 0 1px, transparent 1px) 0 0 / 4px 6px; }
.news { position: relative; width: 60px; height: 46px; }
.news svg { position: absolute; left: 8px; top: 12px; width: 32px; height: 32px; }
.badge { position: absolute; left: 22px; top: 4px; width: 32px; height: 32px; border-radius: 50%; background: linear-gradient(#f0705c, #d8160c); color: #fff; line-height: 32px; }

.chart { flex: 1; display: flex; flex-direction: column; gap: 2px; padding: 4px 0 0 4px; border: solid; border-color: #404040 #fff #e4e4e4 #606060; border-width: 2px 2px 2px 4px; background: #b0e0e4; }
.pane { display: flex; }
.main { flex: 1; min-height: 1136px; }
.zz { height: 62px; }
.rsi { height: 144px; }
.empty { height: 22px; }
.plot { position: relative; flex: 1; border: 2px solid #000; min-width: 0; }
.fill { position: absolute; inset: 0; width: 100%; height: 100%; overflow: hidden; }
.axis { width: 92px; height: 100%; overflow: visible; flex: none; }
.dates { width: 100%; height: 40px; margin-top: -2px; }
.blk2 { stroke: #000; stroke-width: 2; fill: none; }
.t20 { font-size: 20px; }
.t18 { font-size: 18px; }
.t17 { font-size: 17px; }
.inv { fill: #d8f0f2; }
.session, .pips, .pip, .count, .c12, .show { font-family: "Liberation Sans", sans-serif; }
.session { font-size: 24px; font-weight: bold; fill: #daa030; }
.pips { font-size: 22px; font-weight: bold; }
.pip { font-size: 21px; fill: #808080; }
.count { font-size: 25px; }
.c12 { position: absolute; left: 70px; top: 70px; width: 160px; height: 44px; border: 2px solid #000; border-radius: 2px; background: #6a6a6a; color: #20ff20; font-size: 25px; }
.show { position: absolute; right: 42px; top: 31px; width: 76px; height: 38px; border: 1px solid #d8d8d8; background: #0a1ee8; color: #fff; font-size: 23px; }

.tabs { display: flex; align-items: flex-start; height: 38px; border-top: 2px solid #000; border-bottom: 2px solid #fff; box-shadow: inset 4px 0 #b0b0b0, 0 -2px #fff; padding-left: 2px; margin-top: 2px; color: #404040; }
.tabs > button { box-sizing: border-box; width: 170px; height: 36px; padding-left: 31px; line-height: 34px; text-align: left; }
.tabs > button.active { width: 160px; padding-left: 18px; margin-top: -2px; height: 38px; line-height: 38px; background: #fff; color: #000; border: solid #000; border-width: 0 2px 2px; box-shadow: 2px 2px #a8a8a8; }
.tabs > button:nth-child(3) { width: 160px; padding-left: 20px; }
.tabsep { width: 2px; height: 28px; margin-top: 4px; background: #404040; }
.arrows { display: flex; gap: 29px; margin: 10px 20px 0 auto; fill: #999; }
.arrows svg { display: block; width: 8px; height: 12px; }

.status { position: relative; display: flex; height: 44px; align-items: flex-end; line-height: 38px; }
.help { flex: 1; padding: 0 3px; }
.cell { box-sizing: border-box; height: 38px; padding-left: 7px; border-left: 2px solid #808080; box-shadow: inset 2px 0 #fff; white-space: nowrap; }
.net { display: flex; align-items: center; gap: 7px; width: 277px; padding-left: 10px; }
.net svg { width: 46px; height: 26px; }
.resize { position: absolute; right: 0; bottom: 0; width: 30px; height: 32px; }
</style>
